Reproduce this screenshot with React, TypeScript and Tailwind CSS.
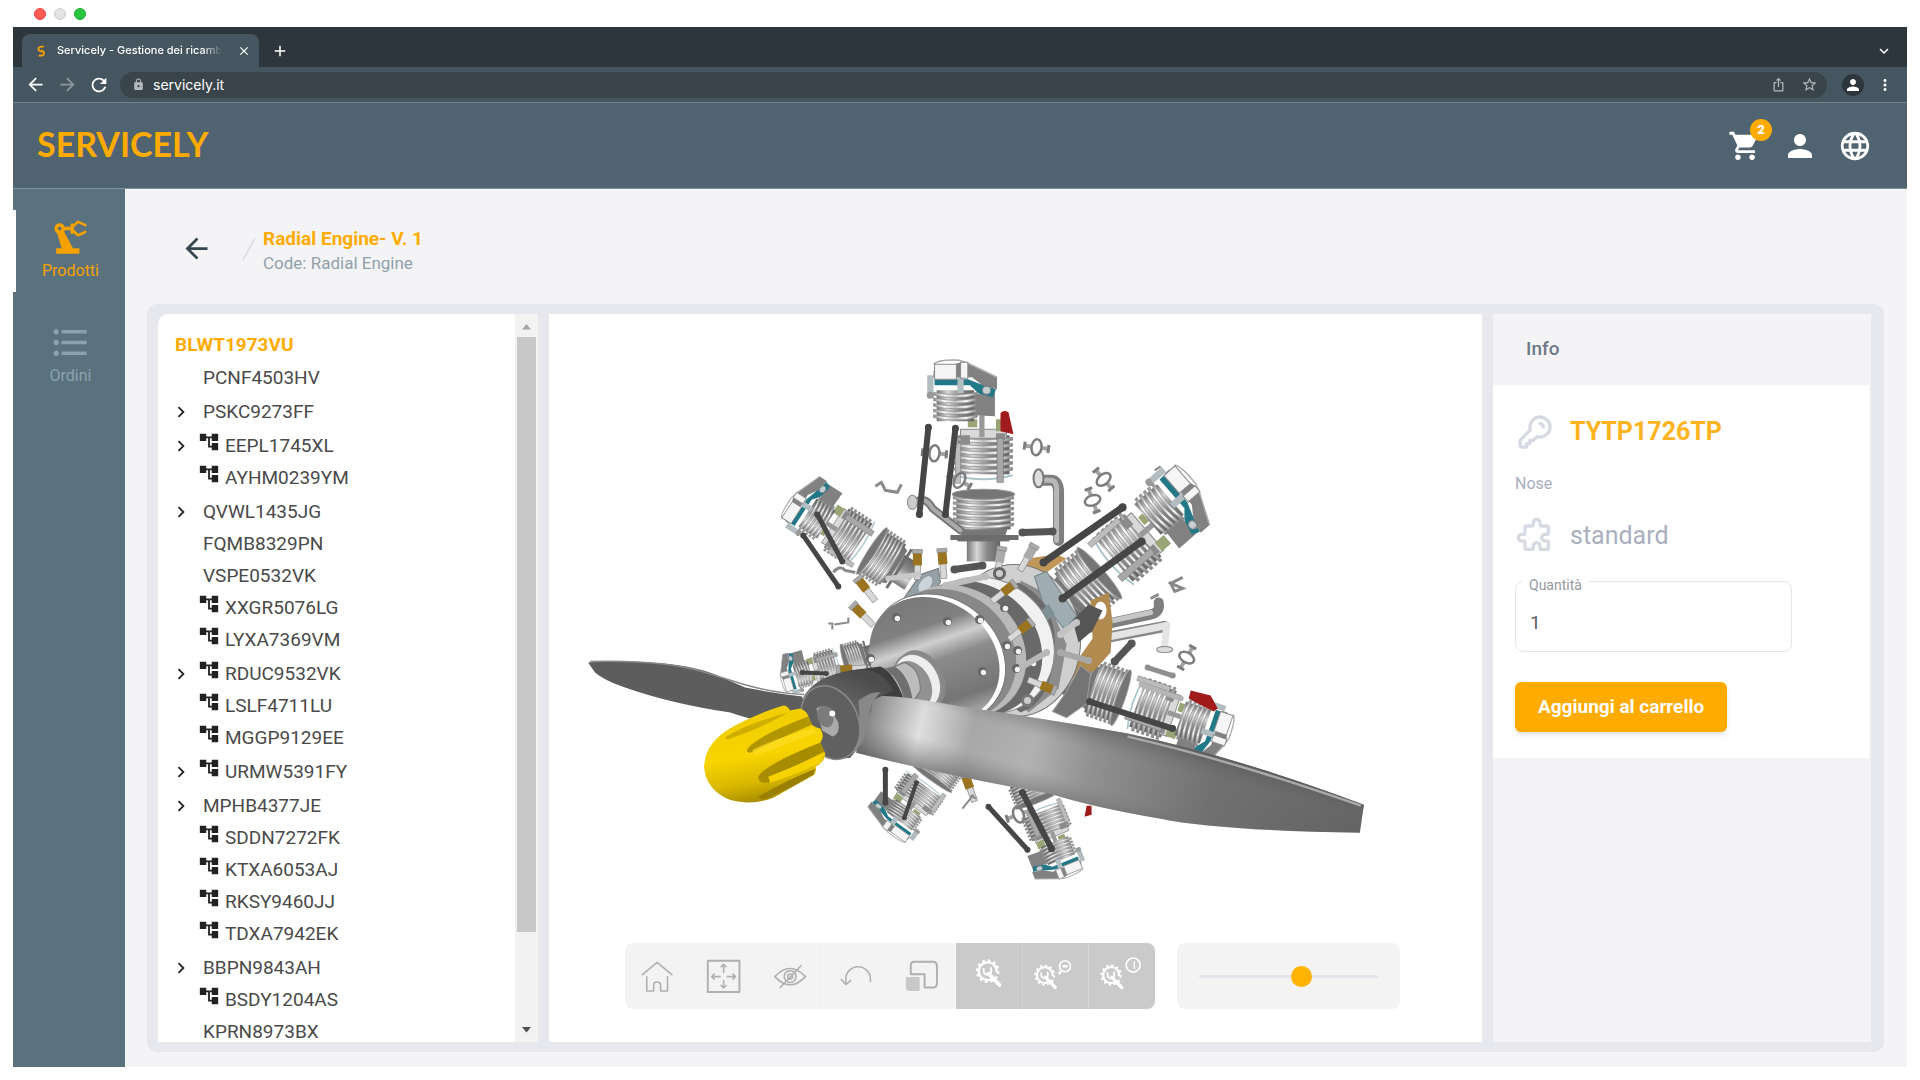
import React, { useState } from 'react'
import {
  MdAccountTree,
  MdAdd,
  MdArrowBack,
  MdArrowForward,
  MdChevronRight,
  MdClose,
  MdFormatListBulleted,
  MdIosShare,
  MdKeyboardArrowDown,
  MdLanguage,
  MdLock,
  MdMoreVert,
  MdPerson,
  MdPrecisionManufacturing,
  MdRefresh,
  MdShoppingCart,
  MdStarBorder,
} from 'react-icons/md'
import { HiOutlineKey, HiOutlinePuzzle } from 'react-icons/hi'

type TreeItem = { code: string; expandable?: boolean; assembly?: boolean }

const treeItems: TreeItem[] = [
  { code: 'PCNF4503HV' },
  { code: 'PSKC9273FF', expandable: true },
  { code: 'EEPL1745XL', expandable: true, assembly: true },
  { code: 'AYHM0239YM', assembly: true },
  { code: 'QVWL1435JG', expandable: true },
  { code: 'FQMB8329PN' },
  { code: 'VSPE0532VK' },
  { code: 'XXGR5076LG', assembly: true },
  { code: 'LYXA7369VM', assembly: true },
  { code: 'RDUC9532VK', expandable: true, assembly: true },
  { code: 'LSLF4711LU', assembly: true },
  { code: 'MGGP9129EE', assembly: true },
  { code: 'URMW5391FY', expandable: true, assembly: true },
  { code: 'MPHB4377JE', expandable: true },
  { code: 'SDDN7272FK', assembly: true },
  { code: 'KTXA6053AJ', assembly: true },
  { code: 'RKSY9460JJ', assembly: true },
  { code: 'TDXA7942EK', assembly: true },
  { code: 'BBPN9843AH', expandable: true },
  { code: 'BSDY1204AS', assembly: true },
  { code: 'KPRN8973BX' },
]

function BrowserBar() {
  return (
    <div className="font-[Inter,sans-serif] text-white">
      <div className="flex h-[27px] items-center gap-2 bg-white px-[21px]">
        <span className="size-3 rounded-full border border-[#e2483f] bg-[#ff5b52]" />
        <span className="size-3 rounded-full border border-[#cfcfcf] bg-[#e3e3e3]" />
        <span className="size-3 rounded-full border border-[#1faa34] bg-[#27c840]" />
      </div>
      <div className="flex h-10 items-end bg-[#2c363c] pr-[14px] pl-[9px]">
        <div className="flex h-[33px] w-[237px] items-center rounded-t-lg bg-[#465660] pr-2 pl-3">
          <svg viewBox="0 0 14 14" className="size-[14px] shrink-0" fill="none" stroke="#f5a100" strokeWidth="1.8">
            <path d="M9.8 2.6H7.6C4 2.6 3.4 6 6.2 7.2L7.6 8" />
            <path d="M4.6 11.7H6.6C10.4 11.7 11 8 8.2 6.8L7 6.2" />
          </svg>
          <span className="ml-[9px] text-[11px] font-medium whitespace-nowrap [mask-image:linear-gradient(to_right,black_88%,transparent)]">
            Servicely - Gestione dei ricamb
          </span>
          <button aria-label="Chiudi scheda" className="ml-auto shrink-0">
            <MdClose size={14} />
          </button>
        </div>
        <button aria-label="Nuova scheda" className="mb-[7px] ml-3">
          <MdAdd size={18} />
        </button>
        <button aria-label="Cerca schede" className="mb-[7px] ml-auto">
          <MdKeyboardArrowDown size={18} />
        </button>
      </div>
      <div className="flex h-9 items-center border-b border-[#75848c] bg-[#465660] pr-[13px] pl-3">
        <button aria-label="Indietro"><MdArrowBack size={21} /></button>
        <button aria-label="Avanti" className="ml-[11px] text-[#8d989e]"><MdArrowForward size={21} /></button>
        <button aria-label="Ricarica" className="ml-[10px]"><MdRefresh size={22} /></button>
        <div className="ml-[10px] flex h-[26px] flex-1 items-center rounded-full bg-[#39454a] pr-[9px] pl-3">
          <MdLock size={13} className="text-[#b3b9bc]" />
          <input
            aria-label="Indirizzo"
            defaultValue="servicely.it"
            className="ml-2 min-w-0 flex-1 bg-transparent text-sm outline-none"
          />
          <MdIosShare size={15} className="text-[#b3b9bc]" />
          <MdStarBorder size={17} className="ml-[15px] text-[#b3b9bc]" />
        </div>
        <span className="ml-[15px] flex size-[22px] items-center justify-center rounded-full bg-[#2c363c]">
          <MdPerson size={18} />
        </span>
        <button aria-label="Menu" className="ml-3"><MdMoreVert size={18} /></button>
      </div>
    </div>
  )
}

function AppHeader() {
  return (
    <header className="flex h-[86px] items-center border-b border-[#7f929c] bg-[#4f6470] pr-[35px] pl-6">
      <a href="#" className="pb-1 font-[Lato,sans-serif] text-[34px] leading-9 font-bold text-[#ffab00]">SERVICELY</a>
      <div className="ml-auto flex items-center gap-5 text-white">
        <button aria-label="Carrello" className="relative">
          <MdShoppingCart size={34} />
          <span className="absolute -top-[10px] -right-[10px] flex size-[22px] items-center justify-center rounded-full bg-[#ffab00] text-[13px] font-black">2</span>
        </button>
        <button aria-label="Profilo"><MdPerson size={36} /></button>
        <button aria-label="Lingua"><MdLanguage size={34} /></button>
      </div>
    </header>
  )
}

function SideNav() {
  return (
    <nav className="flex w-28 shrink-0 flex-col bg-[#5a727e] pt-[21px]">
      <a href="#" className="flex h-[82px] flex-col items-center border-l-[3px] border-white pt-[6px] text-[#f5a100]">
        <MdPrecisionManufacturing size={43} />
        <span className="text-base leading-6">Prodotti</span>
      </a>
      <a href="#" className="mt-[29px] flex flex-col items-center pl-[3px] text-[#8ba2ae]">
        <MdFormatListBulleted size={43} />
        <span className="text-base leading-6">Ordini</span>
      </a>
    </nav>
  )
}

function PartsTree() {
  return (
    <div className="flex w-[380px] shrink-0 overflow-hidden rounded-tl-[10px] bg-white">
      <div className="flex-1 overflow-hidden pt-[15px]">
        <p className="pl-[17px] text-[19px] leading-8 font-bold text-[#ffab00]">BLWT1973VU</p>
        <ul className="pt-px text-[19px] text-[#4a4a4a]">
          {treeItems.map((item) => (
            <li
              key={item.code}
              className={`flex items-center pl-3 ${item.expandable ? 'h-[34px] pt-[2px]' : 'h-8'}`}
            >
              <span className="flex w-[22px] shrink-0">
                {item.expandable && (
                  <button aria-label={`Espandi ${item.code}`} className="text-[#222]">
                    <MdChevronRight size={22} />
                  </button>
                )}
              </span>
              {item.assembly && <MdAccountTree size={22} className="mb-2 ml-[6px] shrink-0 text-[#222]" />}
              <span className={item.assembly ? 'ml-[5px]' : 'ml-[11px]'}>{item.code}</span>
            </li>
          ))}
        </ul>
      </div>
      <div className="flex w-[23px] flex-col items-center bg-[#f2f2f2]">
        <svg viewBox="0 0 23 23" className="h-[23px] w-[23px] shrink-0"><path d="M7 15.500L11.500 10L16 15.500Z" fill="#a6a6a6" /></svg>
        <div className="w-[19px] flex-[595] bg-[#c8c8c8]" />
        <div className="flex-[87]" />
        <svg viewBox="0 0 23 23" className="h-[23px] w-[23px] shrink-0"><path d="M7 8L11.500 13.500L16 8Z" fill="#505050" /></svg>
      </div>
    </div>
  )
}

// stack of cooling fins, local axis pointing up
function Fins({ y, w, h, n }: { y: number; w: number; h: number; n: number }) {
  const step = h / n
  return (
    <g>
      <rect x={-w / 2 + 3} y={y - 2} width={w - 6} height={h + 3} fill="url(#steel)" />
      {Array.from({ length: n }, (_, i) => (
        <path
          key={i}
          d={`M${-w / 2} ${y + i * step} Q0 ${y + i * step + 5} ${w / 2} ${y + i * step} v${step * 0.5} Q0 ${y + i * step + 5 + step * 0.5} ${-w / 2} ${y + i * step + step * 0.5}Z`}
          fill="url(#fin)"
          stroke="#868686"
          strokeWidth="0.6"
        />
      ))}
    </g>
  )
}

function Rod({ x1, y1, x2, y2, c = '#464646', w = 4.5 }: { x1: number; y1: number; x2: number; y2: number; c?: string; w?: number }) {
  return (
    <g stroke={c} fill={c}>
      <line x1={x1} y1={y1} x2={x2} y2={y2} strokeWidth={w} />
      <circle cx={x1} cy={y1} r={w * 0.5} />
      <circle cx={x2} cy={y2} r={w * 0.5} />
    </g>
  )
}

function Bolt({ x, y, a, c = '#9a7420' }: { x: number; y: number; a: number; c?: string }) {
  return (
    <g transform={`translate(${x} ${y}) rotate(${a})`}>
      <rect x="-3" y="6" width="6" height="15" fill="#d8d8d8" stroke="#888" strokeWidth="0.7" />
      <rect x="-4.500" y="-6" width="9" height="13" fill={c} />
      <rect x="-5" y="-9" width="10" height="4" fill="#aaa" stroke="#777" strokeWidth="0.5" />
    </g>
  )
}

function Fitting({ x, y, a }: { x: number; y: number; a: number }) {
  return (
    <g transform={`translate(${x} ${y}) rotate(${a})`} fill="none" stroke="#7d7d7d">
      <path d="M-11 0H-5M5 0H11" strokeWidth="4" stroke="#a4a4a4" />
      <ellipse rx="5" ry="8" strokeWidth="2.500" />
      <path d="M-12 -4V4M12 -4V4" strokeWidth="3" />
    </g>
  )
}

type CylinderProps = { x: number; y: number; a: number; sx: number; sy: number; head?: number }

// exploded cylinder: barrel near the crankcase, rocker head at the far end
function Cylinder({ x, y, a, sx, sy, head = 0 }: CylinderProps) {
  return (
    <g transform={`translate(${x} ${y}) rotate(${a}) scale(${sx} ${sy})`}>
      <rect x="-16" y="-6" width="32" height="26" fill="url(#steel)" />
      <rect x="-25" y="-4" width="50" height="4" fill="#6e6e6e" />
      <path d="M-24 -16H24L21 -6H-21Z" fill="#777" />
      <Fins y={-45} w={58} h={32} n={6} />
      <ellipse cy="-47" rx="30" ry="5" fill="#757575" stroke="#999" />
      <path d="M-28 -66Q0 -58 28 -66" fill="none" stroke="#a8c5cc" strokeWidth="2" />
      <Fins y={-104} w={56} h={36} n={6} />
      <rect x="-22" y="-112" width="44" height="9" fill="#d9d9d9" stroke="#888" />
      <path d="M-22 -106h9v9h-9zM12 -108h9v7h-9z" fill="#8b8b8b" />
      <rect x="13" y="-103" width="6" height="44" fill="#a8a8a8" stroke="#777" strokeWidth="0.6" />
      <rect x="-27" y="-98" width="5" height="40" fill="#bcbcbc" stroke="#888" strokeWidth="0.6" />
      <rect x="-4" y="-126" width="5" height="22" fill="#999" />
      <rect x="-15" y="-122" width="9" height="8" fill="#99a577" />
      <rect x="12" y="-122" width="10" height="12" fill="#99a577" />
      <g transform={`translate(${head} 0)`}>
        <path d="M10 -144L38 -152V-125L18 -126Z" fill="#818181" />
        <Fins y={-149} w={42} h={28} n={5} />
        <path d="M-20 -156H14L22 -148L36 -144L39 -152L22 -158L12 -162H-20Z" fill="#237888" />
        <path d="M-27 -166h6v20h-6zM2 -166h6v18h-6z" fill="#b2bdc1" />
        <path d="M8 -180L40 -164V-152L26 -156L16 -164H-21V-170Z" fill="#818181" />
        <path d="M-21 -177Q-16 -182 4 -181L12 -178L40 -164" fill="none" stroke="#aaa" strokeWidth="1.500" />
        <path d="M-20 -177H1V-162H-20ZM5 -179H12V-163H5Z" fill="#f5f5f5" stroke="#8a8a8a" />
        <circle cx="30" cy="-151" r="4" fill="#c6ced1" stroke="#6f8186" />
        <circle cx="-24" cy="-146" r="3.500" fill="#999" />
      </g>
    </g>
  )
}

function EngineDrawing() {
  return (
    <svg viewBox="549 314 932 626" className="min-h-0 w-full flex-1" role="img" aria-label="Radial Engine">
      <defs>
        <linearGradient id="fin">
          <stop offset="0" stopColor="#8c8c8c" />
          <stop offset="0.25" stopColor="#fff" />
          <stop offset="0.5" stopColor="#c2c2c2" />
          <stop offset="0.75" stopColor="#fbfbfb" />
          <stop offset="1" stopColor="#7e7e7e" />
        </linearGradient>
        <linearGradient id="steel">
          <stop offset="0" stopColor="#777" />
          <stop offset="0.3" stopColor="#d6d6d6" />
          <stop offset="0.6" stopColor="#8a8a8a" />
          <stop offset="1" stopColor="#656565" />
        </linearGradient>
        <linearGradient id="face" x1="0" y1="0.2" x2="1" y2="0.75">
          <stop offset="0" stopColor="#777" />
          <stop offset="0.28" stopColor="#808080" />
          <stop offset="0.4" stopColor="#cfcfcf" />
          <stop offset="0.52" stopColor="#8c8c8c" />
          <stop offset="0.8" stopColor="#757575" />
          <stop offset="0.92" stopColor="#a4a4a4" />
          <stop offset="1" stopColor="#6c6c6c" />
        </linearGradient>
        <linearGradient id="blade" gradientUnits="userSpaceOnUse" x1="860" y1="710" x2="1362" y2="830">
          <stop offset="0" stopColor="#777" />
          <stop offset="0.05" stopColor="#a8a8a8" />
          <stop offset="0.12" stopColor="#ebebeb" />
          <stop offset="0.22" stopColor="#adadad" />
          <stop offset="0.34" stopColor="#b8b8b8" />
          <stop offset="0.46" stopColor="#939393" />
          <stop offset="0.7" stopColor="#6e6e6e" />
          <stop offset="1" stopColor="#5f5f5f" />
        </linearGradient>
        <linearGradient id="bladeShade" gradientUnits="userSpaceOnUse" x1="1040" y1="700" x2="1012" y2="800">
          <stop offset="0" stopColor="#505050" stopOpacity="0.85" />
          <stop offset="0.34" stopColor="#808080" stopOpacity="0.15" />
          <stop offset="0.65" stopColor="#808080" stopOpacity="0.1" />
          <stop offset="1" stopColor="#505050" stopOpacity="0.75" />
        </linearGradient>
        <linearGradient id="nose" x1="0.35" y1="0.1" x2="0.55" y2="1">
          <stop offset="0" stopColor="#f0cd00" />
          <stop offset="0.45" stopColor="#f8d400" />
          <stop offset="0.75" stopColor="#d8b700" />
          <stop offset="1" stopColor="#a18700" />
        </linearGradient>
        <linearGradient id="hub" x1="0" y1="1" x2="0.5" y2="0">
          <stop offset="0" stopColor="#555" />
          <stop offset="0.6" stopColor="#6a6a6a" />
          <stop offset="1" stopColor="#4c4c4c" />
        </linearGradient>
      </defs>

      {/* rear cylinders */}
      <Cylinder x={868} y={655} a={-106} sx={0.62} sy={0.5} />
      <Cylinder x={945} y={757} a={216} sx={0.85} sy={0.52} />
      <Cylinder x={1026} y={772} a={158} sx={0.8} sy={0.62} />
      <Cylinder x={900} y={569} a={-57} sx={0.92} sy={0.72} head={-3} />
      <Cylinder x={1082} y={684} a={109} sx={0.98} sy={0.86} />
      <Cylinder x={1064} y={603} a={49} sx={1.12} sy={0.98} head={-8} />
      <Cylinder x={983} y={541} a={0} sx={1.04} sy={1} head={-27} />

      {/* red plugs */}
      <path d="M1000 413q3-4 8-1l5 22-13-3z" fill="#a01c1c" />
      <path d="M1190 690l20 5 7 13-4 3-14-7-11-6z" fill="#a01c1c" />
      <path d="M1086 805h5v9l-7 2z" fill="#a01c1c" />

      {/* intake and exhaust pipes */}
      <g fill="none" strokeLinecap="round" strokeLinejoin="round">
        <path d="M914 502Q925 495 932 508L960 530" stroke="#777" strokeWidth="8" />
        <path d="M914 502Q925 495 932 508L960 530" stroke="#aaa" strokeWidth="4" />
        <path d="M1040 480H1050Q1058 480 1058 492V540" stroke="#7e7e7e" strokeWidth="11" />
        <path d="M1040 480H1050Q1057 480 1056 492V540" stroke="#b8b8b8" strokeWidth="5" />
        <path d="M1085 628L1150 614Q1160 612 1158 602" stroke="#7e7e7e" strokeWidth="10" />
        <path d="M1085 626L1150 612" stroke="#c6c6c6" strokeWidth="5" />
        <path d="M1100 638L1164 626" stroke="#888" strokeWidth="11" />
        <path d="M1100 638L1166 625L1164 646" stroke="#e4e4e4" strokeWidth="7" />
      </g>
      <ellipse cx="1038" cy="478" rx="5" ry="9" fill="#ddd" stroke="#777" strokeWidth="2" />
      <ellipse cx="1164" cy="649" rx="8" ry="3" fill="#ddd" stroke="#888" />
      <ellipse cx="912" cy="502" rx="5" ry="7" fill="#ccc" stroke="#888" />

      {/* gaskets */}
      <path d="M1010 572l16-14 30-4 10 4-20 14-25 8z" fill="#bf9759" />
      <path d="M1090 600l18-8 4 30-2 30-16 18-30 10-16-4 30-18 14-20z" fill="#b18a50" />
      <ellipse cx="1100" cy="610" rx="6" ry="9" fill="#fff" />

      {/* crankcase */}
      <ellipse cx="1014" cy="640" rx="66" ry="76" fill="#cfcfcf" stroke="#777" />
      <path d="M1020 580l24 12 22 52-8 44-30 24-20-20z" fill="#8c8c8c" />
      <path d="M1018 582q40 20 36 70t-34 60l-10-8q26-30 22-66t-26-50z" fill="#6b6b6b" />
      <path d="M1034 576l12-5 8 12 22 32-12 14-22-28z" fill="#9facb1" stroke="#75848a" />
      <path d="M1036 615l12-12 6 10-14 14z" fill="#7f9096" />
      <path d="M1072 620l16-16 14 6-10 20-14 12z" fill="#555" />
      <path d="M1080 665l10 8-4 30-20 14-14-6 14-20z" fill="#747474" stroke="#9a9a9a" />
      <path d="M902 600l18-26 18-6 2 14-18 24z" fill="#93a1a6" stroke="#777" />
      <ellipse cx="925" cy="584" rx="6" ry="10" transform="rotate(35 925 584)" fill="#cbd5d9" stroke="#8b989c" />
      <ellipse cx="984" cy="645" rx="72" ry="66" transform="rotate(38 984 645)" fill="#f1f1f1" stroke="#8a8a8a" />
      <ellipse cx="972" cy="648" rx="73" ry="64" transform="rotate(38 972 648)" fill="#696969" />
      <ellipse cx="957" cy="651" rx="72" ry="63" transform="rotate(38 957 651)" fill="#b9b9b9" />
      <ellipse cx="948" cy="654" rx="71" ry="62" transform="rotate(38 948 654)" fill="#888" />
      <ellipse cx="938" cy="658" rx="71" ry="60" transform="rotate(38 938 658)" fill="#fff" stroke="#777" />
      <ellipse cx="934" cy="659" rx="69" ry="58" transform="rotate(38 934 659)" fill="url(#face)" />
      {[[896, 617], [947, 621], [982, 671], [870, 658], [1004, 607], [1006, 645], [979, 619], [1016, 668], [1032, 662], [1017, 650]].map(([x, y]) => (
        <g key={`${x}-${y}`}>
          <circle cx={x} cy={y} r="4.500" fill="#666" />
          <circle cx={x + 1} cy={y + 1} r="2.700" fill="#f3f3f3" />
        </g>
      ))}

      {/* loose hardware */}
      <Bolt x={917} y={558} a={0} />
      <Bolt x={942} y={557} a={-4} />
      <Bolt x={862} y={584} a={-38} />
      <Bolt x={858} y={610} a={-45} />
      <Bolt x={1008} y={588} a={52} />
      <Bolt x={1025} y={626} a={52} />
      <Bolt x={1047} y={687} a={112} />
      <Bolt x={845} y={669} a={-95} />
      <Bolt x={1000} y={555} a={10} c="#aaa" />
      <Bolt x={1030} y={552} a={30} c="#aaa" />
      <Bolt x={967} y={781} a={-20} />
      <Rod x1={888} y1={578} x2={918} y2={574} c="#c9c9c9" w={5} />
      <Rod x1={945} y1={585} x2={985} y2={576} c="#bdbdbd" w={6} />
      <Rod x1={1022} y1={666} x2={1046} y2={652} c="#b8b8b8" w={6} />
      <Rod x1={1060} y1={652} x2={1088} y2={660} c="#a8a8a8" w={6} />
      <Rod x1={1060} y1={634} x2={1076} y2={622} c="#c4c4c4" w={6} />
      <Rod x1={1147} y1={667} x2={1172} y2={675} c="#8f8f8f" w={5} />
      <Rod x1={1141} y1={684} x2={1180} y2={698} c="#b5b5b5" w={5} />
      <Rod x1={954} y1={569} x2={982} y2={565} c="#555" w={7} />
      <Rod x1={1022} y1={532} x2={1052} y2={531} c="#555" w={7} />
      <Rod x1={1114} y1={661} x2={1131} y2={643} c="#555" w={7} />
      <path d="M950 537H1018" stroke="#6c6c6c" strokeWidth="5" />
      <circle cx="999" cy="573" r="5" fill="#ccc" stroke="#666" strokeWidth="3" />
      <circle cx="1027" cy="700" r="5" fill="#ccc" stroke="#777" strokeWidth="3" />
      <Fitting x={934} y={453} a={5} />
      <Fitting x={1036} y={447} a={8} />
      <Fitting x={959} y={480} a={30} />
      <Fitting x={1103} y={479} a={50} />
      <Fitting x={1092} y={500} a={70} />
      <Fitting x={1186} y={657} a={-60} />
      <Fitting x={1018} y={814} a={-20} />
      <g fill="none" stroke="#8a8a8a" strokeWidth="3">
        <path d="M875 486l6-4 4 8 12 2 4-8" />
        <path d="M833 572q6-8 12-2l10 2" />
        <path d="M962 808l8-10 3-4M970 795l6 3" strokeWidth="2" />
        <path d="M828 623h4v6M834 624l14-2v-5" strokeWidth="2" />
        <path d="M1150 598l8-4M1168 582l14 6-8 3-4-8 12-6" />
        <path d="M1154 470l6-4M1194 528l6-3" strokeWidth="2" />
      </g>
      <Rod x1={928} y1={427} x2={919} y2={514} w={6} />
      <Rod x1={955} y1={428} x2={945} y2={514} w={6} />
      <Rod x1={817} y1={514} x2={842} y2={561} w={5} />
      <Rod x1={803} y1={535} x2={838} y2={586} w={5} />
      <Rod x1={1043} y1={562} x2={1122} y2={507} w={7} />
      <Rod x1={1062} y1={598} x2={1141} y2={541} w={7} />
      <Rod x1={1089} y1={701} x2={1172} y2={728} w={6} />
      <Rod x1={885} y1={769} x2={885} y2={802} w={5} />
      <Rod x1={916} y1={782} x2={904} y2={817} w={4} />
      <Rod x1={988} y1={806} x2={1027} y2={849} w={5} />
      <Rod x1={1022} y1={792} x2={1051} y2={848} w={6} />
      <Rod x1={802} y1={672} x2={826} y2={673} w={4} />

      {/* shaft */}
      <ellipse cx="921" cy="679" rx="22" ry="31" transform="rotate(-28 921 679)" fill="#888" />
      <ellipse cx="917" cy="681" rx="22" ry="29" transform="rotate(-28 917 681)" fill="#eee" stroke="#8c8c8c" strokeWidth="2" />
      <ellipse cx="912" cy="684" rx="18" ry="25" transform="rotate(-28 912 684)" fill="#919191" />
      <path d="M890 668l14-6q16 6 16 28l-8 12-20-6z" fill="#bcbcbc" stroke="#777" />
      <path d="M850 670l30-4q14 6 24 34l-20 12z" fill="#3e3e3e" />
      <path d="M884 668l10-2q14 8 18 32l-8 2q-6-24-20-32z" fill="#6f6f6f" />

      {/* propeller */}
      <path d="M588 662Q620 659 650 662Q690 664 715 674L745 687Q775 693 802 696L808 720Q775 728 730 712Q670 703 625 687Q604 680 595 672Z" fill="#5d5d5d" />
      <path d="M590 661Q660 659 702 671L744 684Q775 693 804 694" fill="none" stroke="#888" strokeWidth="1.500" />
      <path d="M862 696Q890 692 960 706Q1045 718 1127 733Q1235 756 1363 804L1359 832Q1220 830 1160 818Q1090 806 1050 793Q950 776 856 752Z" fill="url(#blade)" />
      <path d="M862 696Q890 692 960 706Q1045 718 1127 733Q1235 756 1363 804L1359 832Q1220 830 1160 818Q1090 806 1050 793Q950 776 856 752Z" fill="url(#bladeShade)" />
      <path d="M1127 736Q1235 761 1360 805" fill="none" stroke="#a9a9a9" strokeWidth="2.500" />
      <path d="M803 697Q814 676 850 670Q880 664 893 690L872 700Q868 738 850 757L832 759Z" fill="url(#hub)" />
      <path d="M858 700Q872 690 880 692Q868 704 870 716Q868 738 852 754Q862 728 858 700Z" fill="#888" />
      <ellipse cx="830" cy="722" rx="28" ry="38" transform="rotate(-22 830 722)" fill="#606060" stroke="#8a8a8a" strokeWidth="1.500" />
      <path d="M816 708q6-5 14 0l8 14q2 12-6 14l-10-6z" fill="#aaa" />
      <ellipse cx="825" cy="716" rx="8" ry="11" transform="rotate(-20 825 716)" fill="#7b7b7b" />
      <circle cx="832" cy="713" r="3" fill="#fff" />

      {/* spinner */}
      <path d="M783 705Q757 713 733 726Q704 742 704 767Q706 788 727 798Q750 806 773 797L814 774Q817 768 815 766Q824 762 825 753L820 742Q825 736 820 728Q812 726 810 722Q808 710 800 708Q794 709 790 710Q787 705 783 705Z" fill="url(#nose)" />
      <path d="M726 736Q750 722 788 712Q760 728 730 738Q724 740 726 736Z" fill="#cfae00" />
      <path d="M748 747Q760 734 808 716L812 724Q775 740 750 752Q745 752 748 747Z" fill="#b29600" />
      <path d="M752 749Q780 736 812 728L818 732Q780 746 755 755Z" fill="#ffe02a" opacity="0.6" />
      <path d="M758 776Q765 764 820 742L824 751Q785 770 768 782Q758 783 758 776Z" fill="#a88c00" />
      <path d="M768 776Q795 766 823 752L820 762Q790 776 770 782Z" fill="#f5d200" />
      <path d="M758 796Q785 780 815 768L813 774Q780 793 762 799Z" fill="#987f00" />
    </svg>
  )
}

function GearWrench() {
  return (
    <g fill="none" stroke="#fff">
      <path d="M5 7.500A9 9 0 1 1 9 1" strokeWidth="2.200" />
      <circle r="10.800" strokeWidth="2.400" strokeDasharray="3 3" pathLength="72" />
      <path d="M1 2.500L12 14" strokeWidth="3.800" strokeLinecap="round" />
      <path d="M-4 -3Q-5 4 1 3.500Q5 2 3 -4" strokeWidth="2" />
    </g>
  )
}

const tools = [
  {
    label: 'Home',
    icon: <path d="M17 32L32.500 19L48 32M22 33V48H29V42Q29 39 32.500 39Q36 39 36 42V48H43V33" />,
  },
  {
    label: 'Adatta',
    icon: (
      <>
        <rect x="17" y="17.500" width="32" height="31.500" strokeWidth="2" />
        <path d="M33 30V21M30 24L33 21L36 24M33 37V45M30 42L33 45L36 42M30 33.500H21M24 30.500L21 33.500L24 36.500M36 33.500H45M42 30.500L45 33.500L42 36.500" />
      </>
    ),
  },
  {
    label: 'Nascondi',
    icon: (
      <>
        <path d="M17 33.500Q32.500 17 48 33.500Q32.500 50 17 33.500Z" />
        <circle cx="32.500" cy="33.500" r="6" />
        <circle cx="32.500" cy="33.500" r="2.500" />
        <path d="M22 45L44 22" />
      </>
    ),
  },
  {
    label: 'Annulla',
    icon: <path d="M47 39V36A12.500 12.500 0 0 0 22 36V41M17 36L22 41.500L27.500 37" />,
  },
  {
    label: 'Ridimensiona',
    icon: (
      <>
        <path d="M21 31V22Q21 18.500 25 18.500H43Q47.500 18.500 47.500 23V40Q47.500 44.500 44 44.500H35V31Z" strokeWidth="2" />
        <path d="M16 34H30V48H20Q16 48 16 44Z" fill="#c8c8c8" stroke="none" />
      </>
    ),
  },
  { label: 'Componenti', dark: true, icon: <g transform="translate(32 28)"><GearWrench /></g> },
  {
    label: 'Riduci componenti',
    dark: true,
    icon: (
      <>
        <g transform="translate(22 32) scale(.88)"><GearWrench /></g>
        <circle cx="42.500" cy="23" r="5.500" />
        <path d="M40 23H45M38.500 28L36 31" strokeWidth="2.500" />
      </>
    ),
  },
  {
    label: 'Informazioni componenti',
    dark: true,
    icon: (
      <>
        <g transform="translate(22 32) scale(.88)"><GearWrench /></g>
        <circle cx="44" cy="22" r="7" />
        <path d="M45.500 18Q44 22 45.500 26" strokeWidth="1.200" />
      </>
    ),
  },
]

function Viewer() {
  const [explode, setExplode] = useState(58)

  return (
    <section className="flex min-w-0 flex-1 flex-col bg-white">
      <EngineDrawing />
      <div className="mt-[2px] mb-[33px] flex justify-center gap-[22px] pr-[6px]">
        <div className="grid h-[66px] w-[530px] grid-cols-8 overflow-hidden rounded-lg">
          {tools.map((tool) => (
            <button
              key={tool.label}
              aria-label={tool.label}
              className={`border-r last:border-r-0 ${tool.dark ? 'border-[#d4d4d4] bg-[#cacaca]' : 'border-[#f6f6f6] bg-[#f3f3f4]'}`}
            >
              <svg viewBox="0 0 66 66" className="size-full" fill="none" stroke={tool.dark ? '#fff' : '#b0b0b0'} strokeWidth="1.600" strokeLinejoin="round">
                {tool.icon}
              </svg>
            </button>
          ))}
        </div>
        <div className="flex h-[66px] w-[223px] items-center rounded-lg bg-[#f3f3f3] px-[22px]">
          <input
            type="range"
            aria-label="Esplosione"
            value={explode}
            onChange={(e) => setExplode(Number(e.target.value))}
            className="h-[3px] w-full appearance-none rounded-full bg-[#e2e5e9] [&::-webkit-slider-thumb]:size-[21px] [&::-webkit-slider-thumb]:appearance-none [&::-webkit-slider-thumb]:rounded-full [&::-webkit-slider-thumb]:bg-[#ffb300]"
          />
        </div>
      </div>
    </section>
  )
}

function InfoPanel() {
  return (
    <aside className="w-[378px] shrink-0 bg-[#f4f4f7]">
      <h2 className="flex h-[71px] items-center pl-[33px] text-[19px] font-medium text-[#6d7886]">Info</h2>
      <div className="mr-[2px] flex flex-col items-start bg-white px-[22px] pt-[27px] pb-[26px]">
        <div className="flex h-10 items-center gap-[15px]">
          <HiOutlineKey size={40} className="text-[#d8dae3]" />
          <span className="text-[25px] leading-8 font-bold text-[#ffb31f]">TYTP1726TP</span>
        </div>
        <p className="mt-5 text-base leading-6 text-[#a9afbf]">Nose</p>
        <div className="mt-5 flex h-10 items-center gap-[15px]">
          <HiOutlinePuzzle size={40} className="text-[#d8dae3]" />
          <span className="text-[25px] leading-8 text-[#a9afbf]">standard</span>
        </div>
        <div className="relative mt-[25px]">
          <label htmlFor="quantity" className="absolute -top-[6px] left-[7px] bg-white px-[7px] text-sm text-[#94999f]">
            Quantità
          </label>
          <input
            id="quantity"
            defaultValue="1"
            className="h-[71px] w-[277px] rounded-lg border border-[#e6e6e8] px-[14px] pt-3 text-[19px] text-[#5a5f66] outline-none"
          />
        </div>
        <button className="mt-[30px] h-[50px] rounded-md bg-[#ffab00] px-[23px] text-[19px] font-bold text-white shadow-md">
          Aggiungi al carrello
        </button>
      </div>
    </aside>
  )
}

export default function App() {
  return (
    <div className="flex h-screen flex-col bg-white px-[13px] pb-[13px] font-[Roboto,sans-serif]">
      <BrowserBar />
      <AppHeader />
      <div className="flex min-h-0 flex-1">
        <SideNav />
        <main className="flex min-w-0 flex-1 flex-col bg-[#f4f4f7] pr-[23px] pb-[15px] pl-[22px]">
          <div className="flex h-[115px] items-center pt-1 pl-[33px]">
            <button aria-label="Torna indietro" className="text-[#37474f]"><MdArrowBack size={33} /></button>
            <svg viewBox="0 0 14 24" className="ml-[29px] h-6 w-[14px]" stroke="#d9dbe0" strokeWidth="1.500"><path d="M1 23L13 1" /></svg>
            <div className="ml-[7px] pt-1">
              <h1 className="text-[19px] leading-6 font-bold text-[#ffab00]">Radial Engine- V. 1</h1>
              <p className="text-[17px] leading-6 text-[#8fa1ac]">Code: Radial Engine</p>
            </div>
          </div>
          <div className="flex min-h-0 flex-1 gap-[11px] rounded-[10px] bg-[#e7e8ed] py-[10px] pr-[13px] pl-[11px]">
            <PartsTree />
            <Viewer />
            <InfoPanel />
          </div>
        </main>
      </div>
    </div>
  )
}
